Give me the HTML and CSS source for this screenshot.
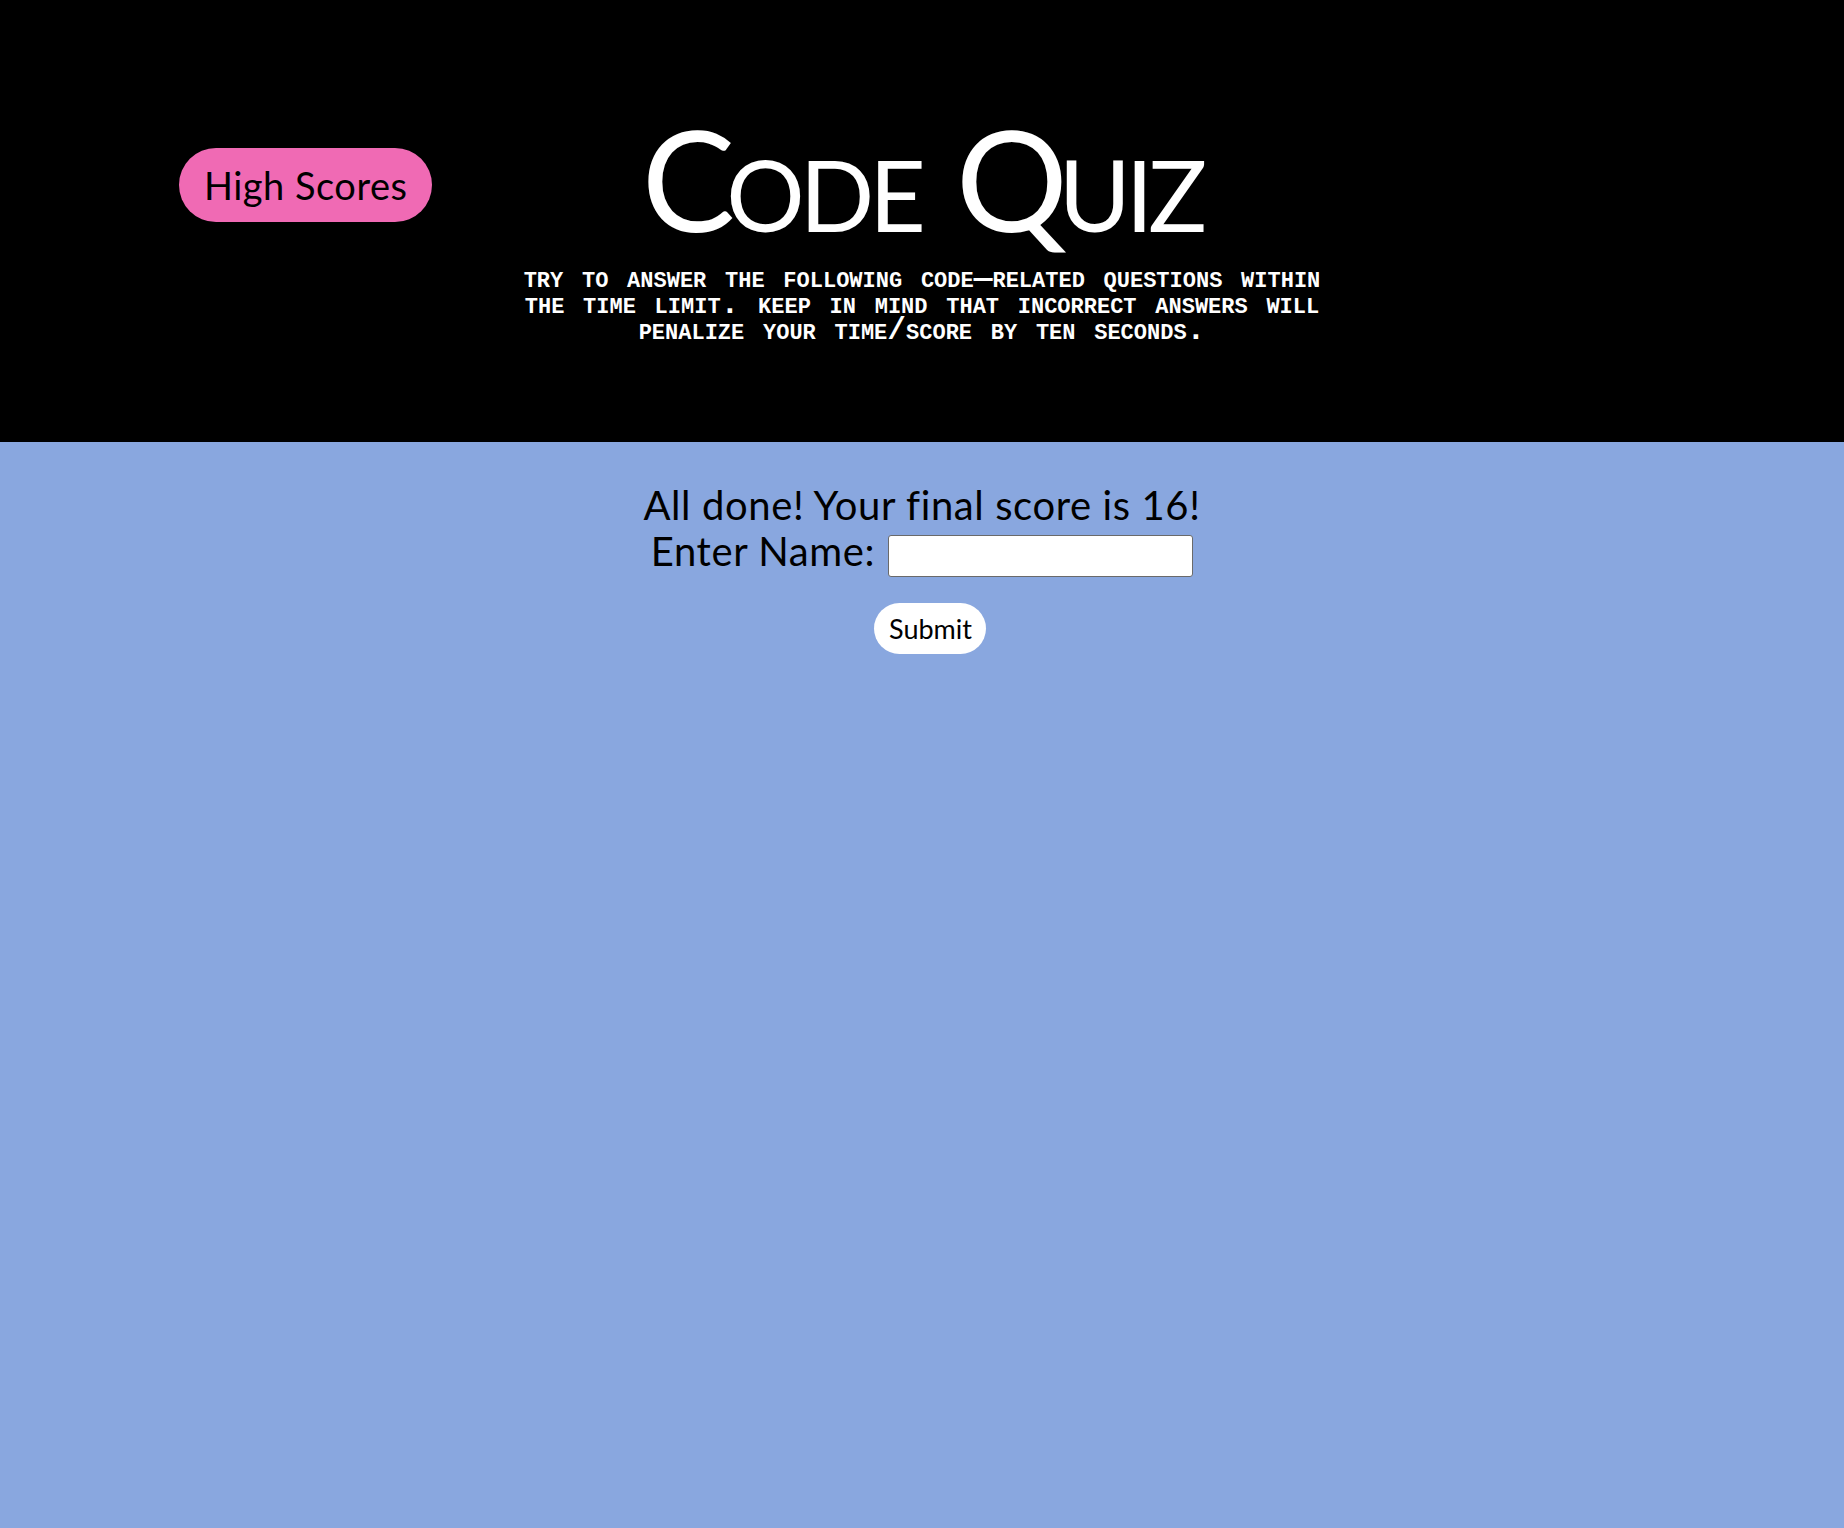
FILE: index.html
```html
<!DOCTYPE html>
<html lang="en">
<head>
<meta charset="utf-8">
<title>Code Quiz</title>
<link rel="stylesheet" href="styles.css">
</head>
<body>
<header class="top">
  <div class="top-left">
    <button class="hs-btn" type="button">High Scores</button>
  </div>
  <div class="top-center">
    <h1 class="title">C<span class="sc">ode</span> Q<span class="sc">uiz</span></h1>
    <p class="desc">try to answer the following code&#8212;related questions within the time limit. keep in mind that incorrect answers will penalize your time/score by ten seconds.</p>
  </div>
  <div class="top-right"></div>
</header>
<main class="main">
  <p class="done">All done! Your final score is 16!</p>
  <div class="name-row">
    <label class="name-label" for="name">Enter Name:</label>
    <input class="name-input" id="name" type="text">
  </div>
  <div class="submit-row">
    <button class="submit-btn" type="button">Submit</button>
  </div>
</main>
</body>
</html>
```

FILE: styles.css
```css
html, body {
  margin: 0;
  padding: 0;
}
body {
  background: #89a7df;
  font-family: "Lato", "Open Sans", sans-serif;
  min-height: 1528px;
}
.top {
  background: #000;
  height: 442px;
  box-sizing: border-box;
  padding-top: 106px;
  display: grid;
  grid-template-columns: 1fr 820px 1fr;
  align-items: start;
}
.top-left {
  padding-left: 179px;
  padding-top: 42px;
}
.hs-btn {
  background: #f06ab4;
  color: #000;
  border: none;
  border-radius: 37px;
  font-family: "Lato", "Open Sans", sans-serif;
  font-size: 38px;
  line-height: 38px;
  letter-spacing: 0.5px;
  padding: 18px 25px;
  height: 74px;
  margin: 0;
}
.top-center {
  display: flex;
  flex-direction: column;
  align-items: center;
}
.title {
  margin: 0;
  color: #fff;
  font-family: "Lato", "Open Sans", sans-serif;
  font-weight: 400;
  font-size: 140px;
  line-height: 144px;
  letter-spacing: -9px;
  word-spacing: 8px;
  text-align: center;
}
.sc {
  font-size: 0.7em;
  text-transform: uppercase;
  letter-spacing: -5px;
}
.desc {
  margin: 0;
  color: #fff;
  font-family: "Liberation Mono", "Courier New", monospace;
  font-weight: 700;
  font-size: 31.2px;
  line-height: 26px;
  font-variant: small-caps;
  text-align: center;
}
.main {
  padding-top: 40px;
  display: flex;
  flex-direction: column;
  align-items: center;
}
.done {
  margin: 0;
  font-size: 40px;
  line-height: 46px;
  letter-spacing: 0.6px;
  color: #000;
}
.name-row {
  display: flex;
  align-items: flex-start;
  gap: 13px;
  height: 46px;
}
.name-label {
  font-size: 40px;
  line-height: 46px;
  letter-spacing: 0.6px;
  color: #000;
}
.name-input {
  margin-top: 7px;
  width: 305px;
  height: 42px;
  box-sizing: border-box;
  border: 1px solid #6a6a6a;
  border-radius: 3px;
  background: #fff;
  font-size: 20px;
}
.submit-row {
  margin-top: 29px;
  padding-left: 16px;
}
.submit-btn {
  background: #fff;
  color: #000;
  border: none;
  border-radius: 26px;
  font-family: "Lato", "Open Sans", sans-serif;
  font-size: 27px;
  line-height: 31px;
  padding: 10px 15px;
  width: 112px;
  height: 51px;
  margin: 0;
}
```
